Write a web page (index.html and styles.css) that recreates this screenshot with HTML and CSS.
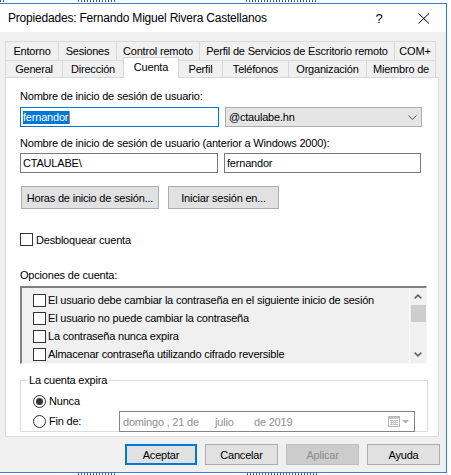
FILE: index.html
```html
<!DOCTYPE html>
<html lang="es">
<head>
<meta charset="utf-8">
<title>Propiedades</title>
<link rel="stylesheet" href="styles.css">
</head>
<body>
<div class="window">
  <div class="titlebar">
    <span class="title">Propiedades: Fernando Miguel Rivera Castellanos</span>
    <span class="help">?</span>
    <span class="close"><svg width="12" height="11" viewBox="0 0 12 11"><path d="M0.5 0.5 L11 10.5 M11 0.5 L0.5 10.5" stroke="#000" stroke-width="1" fill="none"/></svg></span>
  </div>
  <div class="client">
    <div class="tabrow row1">
      <div class="tab">Entorno</div>
      <div class="tab">Sesiones</div>
      <div class="tab">Control remoto</div>
      <div class="tab">Perfil de Servicios de Escritorio remoto</div>
      <div class="tab">COM+</div>
    </div>
    <div class="tabrow row2">
      <div class="tab">General</div>
      <div class="tab">Dirección</div>
      <div class="tab active">Cuenta</div>
      <div class="tab">Perfil</div>
      <div class="tab">Teléfonos</div>
      <div class="tab">Organización</div>
      <div class="tab">Miembro de</div>
    </div>
    <div class="panel">
      <div class="pane">
        <div class="lbl lbl-first">Nombre de inicio de sesión de usuario:</div>
        <div class="field-row row-upn">
          <div class="input focused user-input"><span class="selected-text">fernandor</span></div>
          <div class="combo"><span class="combo-text">@ctaulabe.hn</span><svg class="chev" width="9" height="5" viewBox="0 0 9 5"><path d="M0.5 0.5 L4.5 4.5 L8.5 0.5" stroke="#555" fill="none"/></svg></div>
        </div>
        <div class="lbl lbl-second">Nombre de inicio de sesión de usuario (anterior a Windows 2000):</div>
        <div class="field-row row-sam">
          <div class="input domain-input">CTAULABE\</div>
          <div class="input sam-input">fernandor</div>
        </div>
        <div class="btn-row">
          <div class="btn btn-hours">Horas de inicio de sesión...</div>
          <div class="btn btn-logon">Iniciar sesión en...</div>
        </div>
        <div class="check-row unlock-row"><span class="cb"></span><span>Desbloquear cuenta</span></div>
        <div class="lbl lbl-options">Opciones de cuenta:</div>
        <div class="listbox">
          <div class="items">
            <div class="item"><span class="cb"></span><span>El usuario debe cambiar la contraseña en el siguiente inicio de sesión</span></div>
            <div class="item"><span class="cb"></span><span>El usuario no puede cambiar la contraseña</span></div>
            <div class="item"><span class="cb"></span><span>La contraseña nunca expira</span></div>
            <div class="item"><span class="cb"></span><span>Almacenar contraseña utilizando cifrado reversible</span></div>
          </div>
          <div class="scrollbar">
            <div class="arrow"><svg width="8" height="5" viewBox="0 0 8 5"><path d="M0.7 4.3 L4 1.2 L7.3 4.3" stroke="#606060" stroke-width="1.6" fill="none"/></svg></div>
            <div class="thumb"></div>
            <div class="track"></div>
            <div class="arrow"><svg width="8" height="5" viewBox="0 0 8 5"><path d="M0.7 0.7 L4 3.8 L7.3 0.7" stroke="#606060" stroke-width="1.6" fill="none"/></svg></div>
          </div>
        </div>
        <fieldset class="expire">
          <legend>La cuenta expira</legend>
          <div class="radios">
            <div class="radio-row"><span class="rb checked"></span><span>Nunca</span></div>
            <div class="radio-row"><span class="rb"></span><span class="radio-label">Fin de:</span>
              <div class="datebox">
                <span class="d-day">domingo , 21 de</span><span class="d-month">julio</span><span>de 2019</span>
                <svg class="cal" width="12" height="11" viewBox="0 0 12 11"><rect x="0.5" y="0.5" width="11" height="10" fill="#fff" stroke="#b5b5b5"/><rect x="1" y="1" width="10" height="2" fill="#c8c8c8"/><path d="M2 4.5h8M2 6.5h8M2 8.5h8M3.5 4v5M5.5 4v5M7.5 4v5" stroke="#c4c4c4" stroke-width="1"/></svg>
                <svg class="dd" width="7" height="4" viewBox="0 0 7 4"><path d="M0 0 L7 0 L3.5 3.5 Z" fill="#b0b0b0"/></svg>
              </div>
            </div>
          </div>
        </fieldset>
      </div>
    </div>
    <div class="dialog-buttons">
      <div class="btn dbtn default">Aceptar</div>
      <div class="btn dbtn">Cancelar</div>
      <div class="btn dbtn disabled">Aplicar</div>
      <div class="btn dbtn">Ayuda</div>
    </div>
  </div>
</div>
</body>
</html>
```

FILE: styles.css
```css
* { box-sizing: border-box; }
html, body { margin: 0; padding: 0; }
body {
  width: 451px;
  height: 475px;
  overflow: hidden;
  background-color: #fff;
  background-image:
    repeating-linear-gradient(90deg, #5a5a5a 0 1px, transparent 1px 3px),
    repeating-linear-gradient(90deg, #5a5a5a 0 1px, transparent 1px 3px),
    repeating-linear-gradient(90deg, #5a5a5a 0 1px, transparent 1px 3px),
    repeating-linear-gradient(90deg, #5a5a5a 0 1px, transparent 1px 3px),
    repeating-linear-gradient(90deg, #5a5a5a 0 1px, transparent 1px 3px);
  background-position: 0 0, 78px 0, 246px 0, 78px 473px, 247px 473px;
  background-size: 5px 2px, 38px 2px, 72px 2px, 38px 2px, 70px 2px;
  background-repeat: no-repeat;
  font-family: "Liberation Sans", Arial, sans-serif;
  font-size: 11px;
  letter-spacing: -0.2px;
  color: #000;
}

.window {
  margin-top: 3px;
  width: 447px;
  height: 470px;
  border: 1px solid #2f80d6;
  border-left: 0;
  background: #f0f0f0;
  display: flex;
  flex-direction: column;
}

.titlebar {
  height: 28px;
  background: #fff;
  display: flex;
  align-items: center;
  padding-left: 8px;
  font-size: 12px;
}
.title { flex: 1; white-space: nowrap; }
.help { width: 46px; text-align: center; font-size: 13px; }
.close { width: 44px; display: flex; justify-content: center; }

.client {
  flex: 1;
  padding: 9px 6px 0 5px;
  display: flex;
  flex-direction: column;
}

.tabrow { display: grid; width: 431px; }
.row1 { grid-template-columns: 53px 58px 83px 195px 42px; height: 19px; }
.row2 { grid-template-columns: 57px 61px 55px 44px 66px 78px 70px; height: 17px; }
.tab {
  border-top: 1px solid #d9d9d9;
  border-left: 1px solid #d9d9d9;
  background: #f0f0f0;
  display: flex;
  align-items: center;
  justify-content: center;
  white-space: nowrap;
}
.tab:last-child { border-right: 1px solid #d9d9d9; }
.tab.active {
  background: #fff;
  margin: -3px -1px -1px 0;
  border-right: 1px solid #d9d9d9;
  padding-bottom: 3px;
  position: relative;
  z-index: 1;
}

.panel {
  width: 434px;
  height: 360px;
  border: 1px solid #d9d9d9;
  background: #fff;
  padding-bottom: 4px;
}
.pane {
  height: 354px;
  overflow: hidden;
  padding-left: 14px;
  display: flex;
  flex-direction: column;
  align-items: flex-start;
}

.lbl { line-height: 14px; white-space: nowrap; }
.lbl-first { margin-top: 11px; }
.lbl-second { margin-top: 9px; }
.lbl-options { margin-top: 22px; }

.field-row { display: flex; gap: 6px; }
.row-upn { margin-top: 4px; }
.row-sam { margin-top: 3px; }

.input {
  height: 20px;
  border: 1px solid #7a7a7a;
  background: #fff;
  display: flex;
  align-items: center;
  padding-left: 2px;
  white-space: nowrap;
}
.input.focused { border-color: #0078d7; }
.user-input { width: 199px; }
.domain-input { width: 198px; }
.sam-input { width: 197px; }
.selected-text {
  background: #0078d7;
  color: #fff;
  line-height: 13px;
  padding-right: 1px;
  border-right: 1px solid #e07a2a;
}

.combo {
  width: 197px;
  height: 20px;
  border: 1px solid #adadad;
  background: #e5e5e5;
  display: flex;
  align-items: center;
  padding: 0 4px 0 3px;
}
.combo-text { flex: 1; }

.btn-row { margin-top: 13px; margin-left: 1px; display: flex; gap: 9px; }
.btn {
  height: 23px;
  border: 1px solid #adadad;
  background: #e1e1e1;
  display: flex;
  align-items: center;
  justify-content: center;
  white-space: nowrap;
}
.btn-hours { width: 138px; }
.btn-logon { width: 111px; }

.cb {
  width: 13px;
  height: 13px;
  border: 1px solid #333;
  background: #fff;
  flex: none;
}
.check-row { display: flex; align-items: center; gap: 3px; height: 14px; }
.unlock-row { margin-top: 24px; }

.listbox {
  margin-top: 4px;
  width: 407px;
  height: 80px;
  display: flex;
  background: #f0f0f0;
  border-style: solid;
  border-width: 2px 1px 1px 2px;
  border-color: #7f7f7f #f7f7f7 #f7f7f7 #7f7f7f;
}
.items { flex: 1; padding: 3px 0 0 11px; }
.item { height: 18px; display: flex; align-items: center; gap: 2px; white-space: nowrap; }
.scrollbar {
  width: 17px;
  display: flex;
  flex-direction: column;
  align-items: center;
  border-left: 1px solid #fdfdfd;
}
.arrow { height: 17px; width: 16px; display: flex; align-items: center; justify-content: center; }
.thumb { width: 15px; height: 17px; background: #cdcdcd; }
.track { flex: 1; }

.expire {
  margin: 9px 0 0 0;
  width: 408px;
  min-width: 0;
  padding: 0 0 0 6px;
  border: 1px solid #dcdcdc;
  flex: none;
}
.expire legend { padding: 0 2px; line-height: 14px; }
.radios { padding: 4px 0 0 6px; }
.radio-row { height: 20px; display: flex; align-items: center; gap: 3px; }
.rb {
  width: 13px;
  height: 13px;
  border: 1px solid #333;
  border-radius: 50%;
  background: #fff;
  display: flex;
  align-items: center;
  justify-content: center;
  flex: none;
}
.rb.checked::after {
  content: "";
  width: 7px;
  height: 7px;
  border-radius: 50%;
  background: #333;
}
.radio-label { width: 67px; }
.datebox {
  align-self: flex-start;
  width: 296px;
  height: 21px;
  border: 1px solid #858585;
  background: #fff;
  color: #8e8e8e;
  display: flex;
  align-items: center;
  padding: 0 5px 0 3px;
  white-space: nowrap;
}
.d-day { width: 92px; }
.d-month { width: 39px; }
.cal { margin-left: auto; }
.dd { margin-left: 2px; }

.dialog-buttons {
  margin-top: 7px;
  display: flex;
  justify-content: flex-end;
  gap: 8px;
}
.dbtn { width: 73px; height: 21px; }
.dbtn.default { width: 72px; border: 2px solid #0078d7; }
.dbtn.disabled { background: #cccccc; border-color: #bfbfbf; color: #8d8d8d; }
```
